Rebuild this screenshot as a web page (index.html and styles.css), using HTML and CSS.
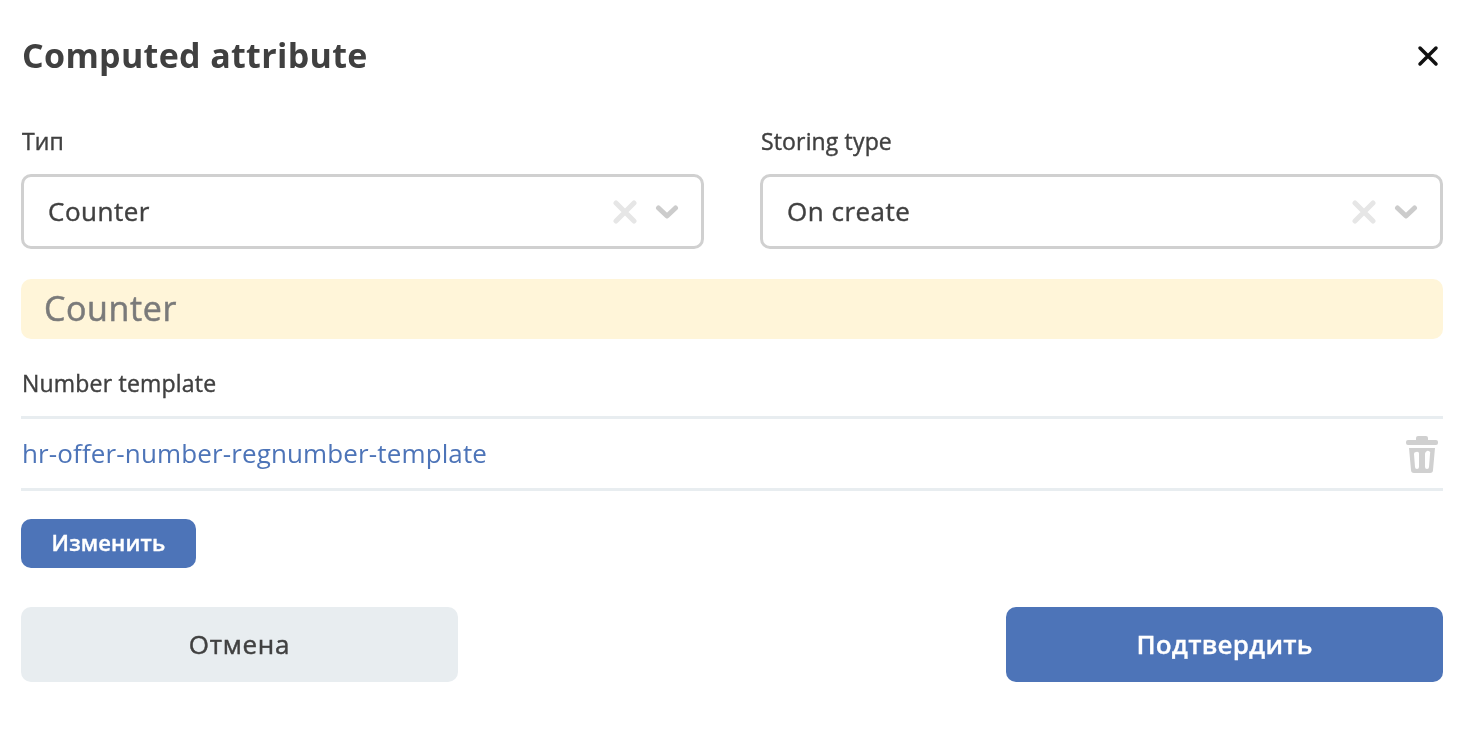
FILE: index.html
```html
<!DOCTYPE html>
<html lang="en">
<head>
    <meta charset="UTF-8">
    <meta name="viewport" content="width=device-width, initial-scale=1.0">
    <title>Computed attribute</title>
    <link rel="stylesheet" href="styles.css">
</head>
<body>
    <div class="modal">
        <div class="modal-head">
            <h1>Computed attribute</h1>
            <svg class="close-icon" width="24" height="24" viewBox="0 0 24 24"><path d="M4 4 L20 20 M20 4 L4 20" /></svg>
        </div>

        <div class="fields">
            <div class="field">
                <label>Тип</label>
                <div class="select">
                    <span class="select-value">Counter</span>
                    <svg class="clear-icon" width="24" height="24" viewBox="0 0 24 24"><path d="M3 3 L21 21 M21 3 L3 21" /></svg>
                    <svg class="arrow-icon" width="24" height="16" viewBox="0 0 24 16"><path d="M3.5 4 L12 12 L20.500 4" /></svg>
                </div>
            </div>
            <div class="field">
                <label>Storing type</label>
                <div class="select">
                    <span class="select-value">On create</span>
                    <svg class="clear-icon" width="24" height="24" viewBox="0 0 24 24"><path d="M3 3 L21 21 M21 3 L3 21" /></svg>
                    <svg class="arrow-icon" width="24" height="16" viewBox="0 0 24 16"><path d="M3.5 4 L12 12 L20.500 4" /></svg>
                </div>
            </div>
        </div>

        <div class="banner">Counter</div>

        <div class="template-label">Number template</div>
        <div class="template-row">
            <a class="template-link">hr-offer-number-regnumber-template</a>
            <svg class="trash-icon" width="32" height="38" viewBox="0 0 32 38">
                <path fill-rule="evenodd" d="M12 1 h8 a2 2 0 0 1 2 2 v2 h8 a2 2 0 0 1 2 2 v1 a2 2 0 0 1 -2 2 H2 a2 2 0 0 1 -2 -2 V7 a2 2 0 0 1 2 -2 h8 V3 a2 2 0 0 1 2 -2 Z M3 13 H29 L27 35 a3 3 0 0 1 -3 3 H8 a3 3 0 0 1 -3 -3 Z M10 17 a2 2 0 0 0 -2 2 L9 32 a2 2 0 0 0 4 0 V19 a2 2 0 0 0 -3 -2 Z M20 17 a2 2 0 0 0 -1 2 V32 a2 2 0 0 0 4 0 L24 19 a2 2 0 0 0 -4 -2 Z" />
            </svg>
        </div>

        <button type="button" class="btn-small">Изменить</button>

        <div class="actions">
            <button type="button" class="btn btn-cancel">Отмена</button>
            <button type="button" class="btn btn-confirm">Подтвердить</button>
        </div>
    </div>
</body>
</html>
```

FILE: styles.css
```css
body {
    margin: 0;
    background-color: #fff;
    font-family: "Open Sans", sans-serif;
    color: #404040;
}
.modal {
    width: 1422px;
    margin-left: 21px;
    transform: translateZ(0);
}
.modal-head {
    display: flex;
    justify-content: space-between;
    align-items: center;
    height: 110px;
    margin-bottom: 17px;
}
h1 {
    margin: 0 0 0 1px;
    font-size: 34px;
    font-weight: 700;
    letter-spacing: 0.33px;
    color: #404040;
}
.close-icon {
    margin: 2px 3px 0 0;
    fill: none;
    stroke: #111;
    stroke-width: 3.5;
    stroke-linecap: round;
}
.fields {
    display: grid;
    grid-template-columns: 683px 683px;
    column-gap: 56px;
}
label {
    display: block;
    margin-left: 1px;
    font-size: 23px;
    letter-spacing: 0.15px;
    line-height: 28px;
    margin-bottom: 19px;
    -webkit-text-stroke: 0.4px #404040;
}
.select {
    display: flex;
    align-items: center;
    box-sizing: border-box;
    height: 75px;
    padding: 0 22px 0 24px;
    border: 3px solid #d0d0d0;
    border-radius: 10px;
}
.select-value {
    flex: 1;
    padding-bottom: 2px;
    font-size: 26px;
    letter-spacing: 0.5px;
    -webkit-text-stroke: 0.4px #404040;
}
.clear-icon {
    margin-right: 18px;
    fill: none;
    stroke: #e6e6e6;
    stroke-width: 5;
    stroke-linecap: round;
}
.arrow-icon {
    fill: none;
    stroke: #cccccc;
    stroke-width: 5;
    stroke-linecap: round;
    stroke-linejoin: round;
}
.banner {
    box-sizing: border-box;
    height: 60px;
    margin-top: 30px;
    padding-left: 23px;
    background-color: #fff5d9;
    border-radius: 10px;
    font-size: 34px;
    letter-spacing: 0.6px;
    line-height: 58px;
    color: #7a7a7a;
    -webkit-text-stroke: 0.5px #7a7a7a;
}
.template-label {
    margin: 29px 0 18px 1px;
    font-size: 23px;
    letter-spacing: 0.2px;
    line-height: 30px;
    -webkit-text-stroke: 0.4px #404040;
}
.template-row {
    display: flex;
    justify-content: space-between;
    align-items: center;
    box-sizing: border-box;
    height: 75px;
    padding-right: 5px;
    border-top: 3px solid #e8edf0;
    border-bottom: 3px solid #e8edf0;
}
.template-link {
    margin-left: 1px;
    padding-bottom: 2px;
    font-size: 26px;
    letter-spacing: 0.13px;
    color: #4d74b8;
}
.trash-icon {
    fill: #d0d0d0;
}
button {
    display: block;
    border: none;
    font-family: "Open Sans", sans-serif;
    cursor: pointer;
}
.btn-small {
    width: 175px;
    height: 49px;
    margin-top: 28px;
    padding: 0 0 3px;
    background-color: #4d74b8;
    border-radius: 10px;
    color: #fff;
    font-size: 22px;
    font-weight: 600;
    letter-spacing: 0.15px;
    -webkit-text-stroke: 0.4px #fff;
}
.actions {
    display: flex;
    justify-content: space-between;
    margin-top: 39px;
}
.btn {
    width: 437px;
    height: 75px;
    padding: 0 0 2px;
    border-radius: 10px;
    font-size: 26px;
    font-weight: 600;
    letter-spacing: 0.2px;
}
.btn-cancel {
    background-color: #e8edf0;
    color: #404040;
    font-weight: 400;
    letter-spacing: 0.75px;
    -webkit-text-stroke: 0.45px #404040;
}
.btn-confirm {
    background-color: #4d74b8;
    color: #fff;
    -webkit-text-stroke: 0.3px #fff;
}
```
